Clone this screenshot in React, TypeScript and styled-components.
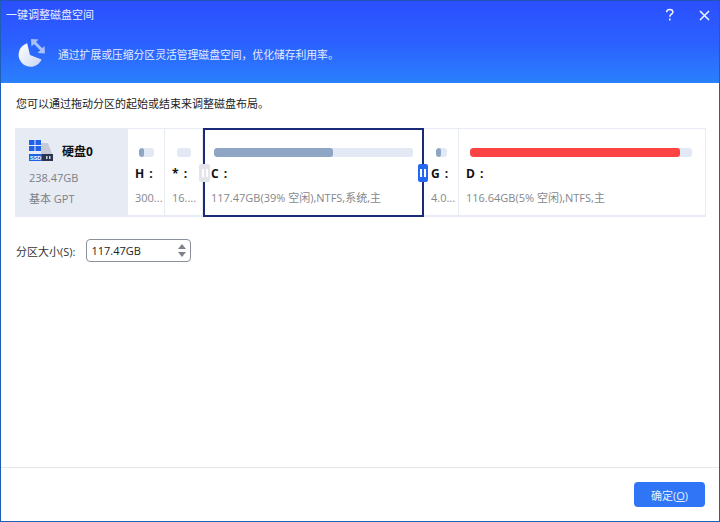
import React from "react";
import styled, { createGlobalStyle } from "styled-components";

const GlobalStyle = createGlobalStyle`
  html, body {
    margin: 0;
    padding: 0;
    background: #fff;
  }
  * {
    box-sizing: border-box;
  }
`;

const Window = styled.div`
  width: 720px;
  height: 522px;
  display: flex;
  flex-direction: column;
  background: #fff;
  border: 1px solid #1d5fb4;
  border-top-color: #1e55b8;
  font-family: "Open Sans", "Noto Sans CJK SC", sans-serif;
  font-size: 11px;
  overflow: hidden;
`;

const Header = styled.div`
  height: 82px;
  flex: none;
  display: flex;
  flex-direction: column;
  background: linear-gradient(180deg, #2b4fff 0%, #2b60ff 50%, #2a80fd 100%);
  color: #fff;
`;

const TitleBar = styled.div`
  height: 25px;
  padding: 0 9px 0 5px;
  display: flex;
  align-items: center;
  justify-content: space-between;
  font-size: 11px;
  color: #e6edff;
`;

const TitleButtons = styled.div`
  margin-top: 3px;
  display: flex;
  align-items: center;
  gap: 23px;
`;

const Banner = styled.div`
  padding: 12px 0 0 17px;
  display: flex;
  align-items: center;
  gap: 11px;
  font-size: 10.8px;
  color: #e3ecff;
`;

const Body = styled.div`
  flex: 1;
  padding: 13px 14px 0;
  display: flex;
  flex-direction: column;
`;

const Hint = styled.div`
  height: 16px;
  line-height: 16px;
  padding-left: 1px;
  color: #222;
  font-size: 11px;
`;

const DiskRow = styled.div`
  margin-top: 16px;
  width: 691px;
  height: 89px;
  display: flex;
  background: #e7ebf4;
  padding: 1px 1px 2px 0;
`;

const DiskInfo = styled.div`
  width: 113px;
  flex: none;
  padding: 10px 0 0 14px;
  display: flex;
  flex-direction: column;
  background: #e7ebf4;
`;

const DiskName = styled.div`
  display: flex;
  align-items: center;
  gap: 9px;
  height: 24px;
  font-weight: 700;
  color: #111;
  font-size: 12px;
`;

const DiskMeta = styled.div`
  margin-top: 6px;
  height: 17px;
  line-height: 17px;
  color: #7d7f84;
  font-size: 11px;
  & + & {
    margin-top: 4px;
  }
`;

const Partition = styled.div<{ $width: number; $selected?: boolean }>`
  position: relative;
  width: ${(p) => p.$width}px;
  flex: none;
  margin-right: ${(p) => (p.$selected ? 0 : 1)}px;
  background: #fff;
  padding: ${(p) => (p.$selected ? "18px 6px 0 6px" : "19px 6px 0 7px")};
  ${(p) =>
    p.$selected
      ? `
    border: 2px solid #1b2a78;
    margin-top: -1px;
    margin-bottom: -2px;
    z-index: 1;
  `
      : ""}
`;

const Track = styled.div<{ $inset: number; $end?: number }>`
  height: 9px;
  margin: 0 ${(p) => p.$end ?? p.$inset}px 0 ${(p) => p.$inset}px;
  border-radius: 3px;
  background: #e2e8f4;
  overflow: hidden;
`;

const Fill = styled.div<{ $color: string }>`
  height: 100%;
  background: ${(p) => p.$color};
  border-radius: 3px;
`;

const Letter = styled.div`
  margin-top: 9px;
  height: 16px;
  line-height: 16px;
  font-family: "Open Sans", sans-serif;
  font-weight: 700;
  font-size: 12px;
  letter-spacing: 1px;
  white-space: pre;
  color: #111;
`;

const Detail = styled.div`
  margin-top: 7px;
  height: 17px;
  line-height: 17px;
  font-size: 11px;
  color: #85878c;
  white-space: nowrap;
`;

const Grip = styled.div<{ $side: "left" | "right"; $active?: boolean }>`
  position: absolute;
  top: 34px;
  ${(p) => (p.$side === "left" ? "left: -6px;" : "right: -6px;")}
  width: ${(p) => (p.$active ? 10 : 11)}px;
  height: 18px;
  border-radius: 2px;
  display: flex;
  align-items: center;
  justify-content: center;
  gap: 2px;
  background: ${(p) => (p.$active ? "#2468f2" : "#e3e5ea")};
  z-index: 2;
  i {
    width: 2px;
    height: 8px;
    background: #fff;
  }
`;

const SizeRow = styled.div`
  margin-top: 22px;
  padding-left: 1px;
  display: flex;
  align-items: center;
  gap: 11px;
  color: #333;
  font-size: 11px;
`;

const Spinner = styled.div`
  width: 105px;
  height: 23px;
  padding: 0 4px 0 4px;
  display: flex;
  align-items: center;
  justify-content: space-between;
  border: 1px solid #8a9099;
  border-radius: 4px;
  color: #222;
  font-size: 11px;
`;

const Arrows = styled.div`
  display: flex;
  flex-direction: column;
  gap: 3px;
`;

const Arrow = styled.div<{ $up?: boolean }>`
  width: 0;
  height: 0;
  border-left: 4.5px solid transparent;
  border-right: 4.5px solid transparent;
  ${(p) => (p.$up ? "border-bottom" : "border-top")}: 5px solid #7d838c;
`;

const Footer = styled.div`
  height: 54px;
  flex: none;
  border-top: 1px solid #e6e6e6;
  padding: 14px 14px 0 0;
  display: flex;
  justify-content: flex-end;
`;

const OkButton = styled.button`
  width: 71px;
  height: 25px;
  padding: 0;
  border: none;
  border-radius: 4px;
  background: #2f75f6;
  color: #e8f0ff;
  font-family: inherit;
  font-size: 11px;
  u {
    text-underline-offset: 1px;
  }
`;

const PieIcon = () => (
  <svg width="29" height="31" viewBox="0 0 29 31">
    <defs>
      <linearGradient id="pie" x1="0" y1="0" x2="1" y2="1">
        <stop offset="0" stopColor="#ffffff" />
        <stop offset="1" stopColor="#c9d6f2" />
      </linearGradient>
    </defs>
    <path d="M9.2 5.3A12 12 0 1 0 23.6 21.6L12 17Z" fill="url(#pie)" />
    <path d="M16 4L24 12" stroke="#a9c2f5" strokeWidth="3" fill="none" />
    <polygon points="13,1 20.5,1.5 13.5,8.5" fill="#a9c2f5" />
    <polygon points="27,15.5 19.5,15 26.5,8" fill="#a9c2f5" />
  </svg>
);

const DiskIcon = () => (
  <svg width="24" height="22" viewBox="0 0 24 22">
    <path d="M12 3H19L23 14H12Z" fill="#c5cad6" />
    <rect x="0" y="0" width="5.5" height="5" fill="#1f62e8" />
    <rect x="6.5" y="0" width="5.5" height="5" fill="#1f62e8" />
    <rect x="0" y="6" width="5.5" height="5" fill="#1f62e8" />
    <rect x="6.5" y="6" width="5.5" height="5" fill="#1f62e8" />
    <rect x="0" y="14" width="24" height="7" fill="#2c3550" />
    <rect x="0" y="14" width="13" height="7" fill="#1f62e8" />
    <text x="1" y="20" fontSize="5.5" fontWeight="700" fill="#fff" fontFamily="Liberation Sans, sans-serif">
      SSD
    </text>
    <rect x="17" y="16" width="1.5" height="3" fill="#cfd4de" />
    <rect x="20" y="16" width="1.5" height="3" fill="#cfd4de" />
  </svg>
);

const HelpIcon = () => (
  <svg width="12" height="14" viewBox="0 0 12 14" fill="none" stroke="#f2f5ff" strokeWidth="1.5">
    <path d="M2.6 4.2C2.6 2.4 4 1.4 5.7 1.4C7.5 1.4 8.9 2.4 8.9 4C8.9 6.2 5.8 6.2 5.8 8.8" />
    <path d="M5.8 10.6V12.4" />
  </svg>
);

const CloseIcon = () => (
  <svg width="11" height="11" viewBox="0 0 11 11" fill="none" stroke="#f2f5ff" strokeWidth="1.5">
    <path d="M1 1L10 10M10 1L1 10" />
  </svg>
);

const App = () => {
  return (
    <Window>
      <GlobalStyle />
      <Header>
        <TitleBar>
          <span>一键调整磁盘空间</span>
          <TitleButtons>
            <HelpIcon />
            <CloseIcon />
          </TitleButtons>
        </TitleBar>
        <Banner>
          <PieIcon />
          <span>通过扩展或压缩分区灵活管理磁盘空间，优化储存利用率。</span>
        </Banner>
      </Header>
      <Body>
        <Hint>您可以通过拖动分区的起始或结束来调整磁盘布局。</Hint>
        <DiskRow>
          <DiskInfo>
            <DiskName>
              <DiskIcon />
              硬盘0
            </DiskName>
            <DiskMeta>238.47GB</DiskMeta>
            <DiskMeta>基本 GPT</DiskMeta>
          </DiskInfo>
          <Partition $width={36}>
            <Track $inset={4}>
              <Fill $color="#8ea5c4" style={{ width: "30%" }} />
            </Track>
            <Letter>H :</Letter>
            <Detail>300...</Detail>
          </Partition>
          <Partition $width={37}>
            <Track $inset={5}>
              <Fill $color="#8ea5c4" style={{ width: "0%" }} />
            </Track>
            <Letter>* :</Letter>
            <Detail>16....</Detail>
          </Partition>
          <Partition $width={221} $selected>
            <Track $inset={3}>
              <Fill $color="#8ea5c4" style={{ width: "60%" }} />
            </Track>
            <Letter>C :</Letter>
            <Detail>117.47GB(39% 空闲),NTFS,系统,主</Detail>
            <Grip $side="left">
              <i />
              <i />
            </Grip>
            <Grip $side="right" $active>
              <i />
              <i />
            </Grip>
          </Partition>
          <Partition $width={34}>
            <Track $inset={5}>
              <Fill $color="#8ea5c4" style={{ width: "45%" }} />
            </Track>
            <Letter>G :</Letter>
            <Detail>4.0...</Detail>
          </Partition>
          <Partition $width={246}>
            <Track $inset={4} $end={7}>
              <Fill $color="#fc4444" style={{ width: "94.6%" }} />
            </Track>
            <Letter>D :</Letter>
            <Detail>116.64GB(5% 空闲),NTFS,主</Detail>
          </Partition>
        </DiskRow>
        <SizeRow>
          <span>分区大小(S):</span>
          <Spinner>
            <span>117.47GB</span>
            <Arrows>
              <Arrow $up />
              <Arrow />
            </Arrows>
          </Spinner>
        </SizeRow>
      </Body>
      <Footer>
        <OkButton>
          确定(<u>O</u>)
        </OkButton>
      </Footer>
    </Window>
  );
};

export default App;
